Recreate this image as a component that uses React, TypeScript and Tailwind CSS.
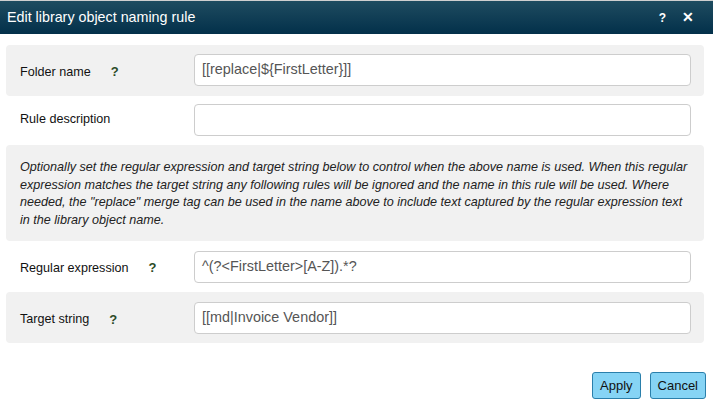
export default function App() {
    const help = (
        <span className="ml-[20px] text-[13px] font-bold text-[#2b4a26] leading-none">?</span>
    )

    return (
        <div className="w-[713px] h-[410px] bg-white font-['Liberation_Sans',Arial,sans-serif] text-[#111]">
            <div className="h-[34px] border-t border-[#cfcfcf] bg-gradient-to-b from-[#1e4c60] to-[#03304a] flex items-center justify-between pl-[7px] pr-[19px]">
                <span className="text-white text-[14.3px]">Edit library object naming rule</span>
                <div className="flex items-center gap-[16px] text-white font-bold">
                    <span className="text-[12px]">?</span>
                    <span className="text-[14px]">✕</span>
                </div>
            </div>

            <div className="px-[6px] pt-[11px] w-[710px]">
                <div className="h-[51px] bg-[#f1f1f1] rounded-sm flex items-center pl-[14px] pr-[13px]">
                    <div className="w-[174px] flex items-center text-[12.6px] mt-[3px]">
                        <span>Folder name</span>
                        {help}
                    </div>
                    <div className="flex-1 h-[32px] -mt-[1px] bg-white border border-[#cdcdcd] rounded-[4px] flex items-center px-[7px] text-[14.4px] text-[#555]">
                        [[replace|${"{"}FirstLetter{"}"}]]
                    </div>
                </div>

                <div className="h-[49px] flex items-center pl-[14px] pr-[13px]">
                    <div className="w-[174px] text-[12.6px] -mt-[2px]">Rule description</div>
                    <div className="flex-1 h-[32px] -mt-[1px] bg-white border border-[#cdcdcd] rounded-[4px]" />
                </div>

                <div className="h-[96px] bg-[#f1f1f1] rounded-sm pl-[14px] pr-[12px] pt-[14px] text-[12.6px] italic leading-[17.6px] text-[#222]">
                    Optionally set the regular expression and target string below to control when the above name is used. When this regular expression matches the target string any following rules will be ignored and the name in this rule will be used. Where needed, the "replace" merge tag can be used in the name above to include text captured by the regular expression text in the library object name.
                </div>

                <div className="h-[51px] flex items-center pl-[14px] pr-[13px]">
                    <div className="w-[174px] flex items-center text-[12.6px] mt-[3px]">
                        <span>Regular expression</span>
                        {help}
                    </div>
                    <div className="flex-1 h-[32px] bg-white border border-[#cdcdcd] rounded-[4px] flex items-center px-[7px] text-[14.4px] text-[#555]">
                        ^(?&lt;FirstLetter&gt;[A-Z]).*?
                    </div>
                </div>

                <div className="h-[51px] bg-[#f1f1f1] rounded-sm flex items-center pl-[14px] pr-[13px]">
                    <div className="w-[174px] flex items-center text-[12.6px] mt-[4px]">
                        <span>Target string</span>
                        {help}
                    </div>
                    <div className="flex-1 h-[32px] bg-white border border-[#cdcdcd] rounded-[4px] flex items-center px-[7px] text-[14.4px] text-[#555]">
                        [[md|Invoice Vendor]]
                    </div>
                </div>
            </div>

            <div className="flex justify-end gap-[9px] pr-[7px] pt-[29px]">
                <button className="h-[27px] px-[7px] bg-[#86d4f5] border border-[#2a7fab] rounded-[3px] text-[13px] text-[#111]">
                    Apply
                </button>
                <button className="h-[27px] px-[7px] bg-[#86d4f5] border border-[#2a7fab] rounded-[3px] text-[13px] text-[#111]">
                    Cancel
                </button>
            </div>
        </div>
    )
}
